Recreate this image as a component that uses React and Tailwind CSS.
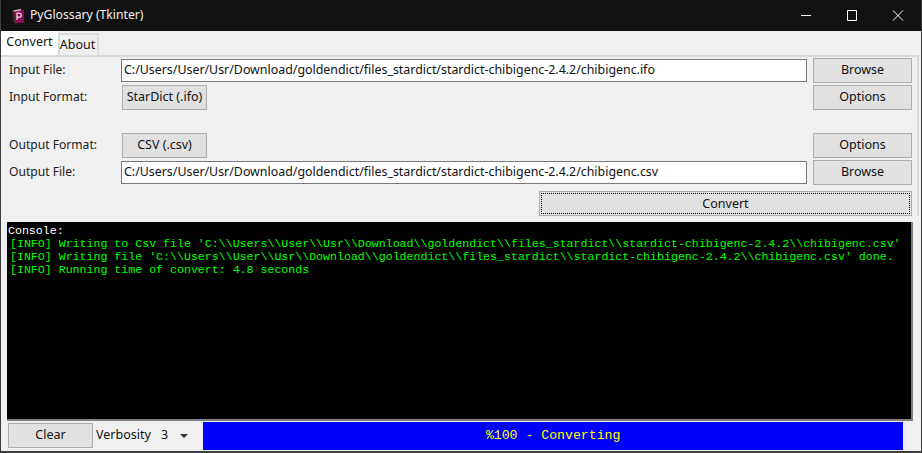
const ui = "font-['Noto_Sans','Open_Sans',sans-serif]";

function Btn({ children, className = "" }) {
  return (
    <div className={`flex h-[25px] items-center justify-center border border-[#adadad] bg-[#e1e1e1] text-[12.5px] text-[#111] ${className}`}>
      {children}
    </div>
  );
}

function Entry({ value }) {
  return (
    <div className="flex h-[23px] w-[686px] items-center border border-[#7a7a7a] bg-white pl-[2px] text-[12.4px] whitespace-nowrap text-[#111]">
      {value}
    </div>
  );
}

function Logo() {
  return (
    <svg width="16" height="16" viewBox="0 0 16 16" className="shrink-0">
      <path d="M4 2.5 14 2V14.5L5 15.5Z" fill="#8e0f55" />
      <path d="M4 2.5 2 3.5 3.5 14.5 5 15.5Z" fill="#352a2e" />
      <path d="M3 2.5 11 1V2.5L4 3.5Z" fill="#e3c6d3" />
      <path d="M7 12V5.2H9.2A2 2 0 0 1 9.2 9.2H7" fill="none" stroke="#f4dbe6" strokeWidth="1.2" />
    </svg>
  );
}

export default function App() {
  return (
    <div className={`flex h-[453px] w-[922px] flex-col overflow-hidden border-x border-b-2 border-[#3c3c3c] bg-[#f0f0f0] ${ui}`}>
      {/* title bar */}
      <div className="flex h-[31px] shrink-0 items-center bg-[#111] pl-[9px] text-white">
        <Logo />
        <span className="ml-[4px] text-[12.2px] text-[#f0f0f0]">PyGlossary (Tkinter)</span>
        <div className="ml-auto flex items-center">
          <svg width="46" height="31" viewBox="0 0 46 31" className="text-white">
            <path d="M18 15.5H28" stroke="currentColor" strokeWidth="1" />
          </svg>
          <svg width="46" height="31" viewBox="0 0 46 31">
            <path d="M18.5 10.5H27.5V20.5H18.5Z" fill="none" stroke="#fff" strokeWidth="1" />
          </svg>
          <svg width="46" height="31" viewBox="0 0 46 31">
            <path d="M18 10.5 28 20.5M28 10.5 18 20.5" fill="none" stroke="#fff" strokeWidth="1" />
          </svg>
        </div>
      </div>

      {/* tabs */}
      <div className="flex h-[24px] shrink-0 items-end text-[12.5px] text-[#111]">
        <div className="flex h-[24px] w-[57px] items-center justify-center bg-white pb-[2px]">Convert</div>
        <div className="flex h-[22px] w-[41px] items-center justify-center border-x-2 border-t-2 border-[#dcdcdc] pr-[2px]">About</div>
      </div>

      {/* pane */}
      <div className="mr-[2px] flex flex-col border-t-2 border-r-2 border-[#d9d9d9] pr-[5px] pl-[8px]">
        <div className="flex h-[27px] items-center justify-between">
          <span className="w-[112px] text-[12.1px] text-[#222]">Input File:</span>
          <Entry value="C:/Users/User/Usr/Download/goldendict/files_stardict/stardict-chibigenc-2.4.2/chibigenc.ifo" />
          <Btn className="ml-[6px] w-[99px]">Browse</Btn>
        </div>
        <div className="flex h-[27px] items-center">
          <span className="w-[113px] text-[12.1px] text-[#222]">Input Format:</span>
          <Btn className="w-[85px]">StarDict (.ifo)</Btn>
          <Btn className="ml-auto w-[99px]">Options</Btn>
        </div>
        <div className="mt-[21px] flex h-[27px] items-center">
          <span className="w-[113px] text-[12.1px] text-[#222]">Output Format:</span>
          <Btn className="w-[85px]">CSV (.csv)</Btn>
          <Btn className="ml-auto w-[99px]">Options</Btn>
        </div>
        <div className="flex h-[27px] items-center justify-between">
          <span className="w-[112px] text-[12.1px] text-[#222]">Output File:</span>
          <Entry value="C:/Users/User/Usr/Download/goldendict/files_stardict/stardict-chibigenc-2.4.2/chibigenc.csv" />
          <Btn className="ml-[6px] w-[99px]">Browse</Btn>
        </div>
        <div className="mt-[5px] flex justify-end">
          <Btn className="w-[373px] pt-[1px] outline-1 -outline-offset-3 outline-black outline-dotted">Convert</Btn>
        </div>
      </div>

      {/* console */}
      <div className="mt-[6px] ml-[6px] h-[199px] w-[906px] shrink-0 overflow-hidden border-r-2 border-b-2 border-[#808080] bg-black pt-[2px] pl-[1px] font-['Liberation_Mono',monospace] text-[11.6px] leading-[13px] whitespace-pre text-[#00ff00]">
        <div className="text-white">Console:</div>
        <div className="pl-[2px]">[INFO] Writing to Csv file 'C:\\Users\\User\\Usr\\Download\\goldendict\\files_stardict\\stardict-chibigenc-2.4.2\\chibigenc.csv'</div>
        <div className="pl-[2px]">[INFO] Writing file 'C:\\Users\\User\\Usr\\Download\\goldendict\\files_stardict\\stardict-chibigenc-2.4.2\\chibigenc.csv' done.</div>
        <div className="pl-[2px]">[INFO] Running time of convert: 4.8 seconds</div>
      </div>

      {/* bottom row */}
      <div className="flex h-[29px] shrink-0 items-center pl-[7px]">
        <Btn className="w-[85px]">Clear</Btn>
        <span className="ml-[3px] w-[65px] text-[12.5px] text-[#111]">Verbosity</span>
        <span className="text-[12.5px] text-[#111]">3</span>
        <svg width="8" height="4" viewBox="0 0 8 4" className="ml-[12px]">
          <path d="M0 0H8L4 4Z" fill="#333" />
        </svg>
        <div className="ml-[15px] flex h-[28px] w-[700px] items-center justify-center bg-[#0000ff] font-['Liberation_Mono',monospace] text-[13.2px] text-[#ffff00]">
          %100 - Converting
        </div>
      </div>
    </div>
  );
}
